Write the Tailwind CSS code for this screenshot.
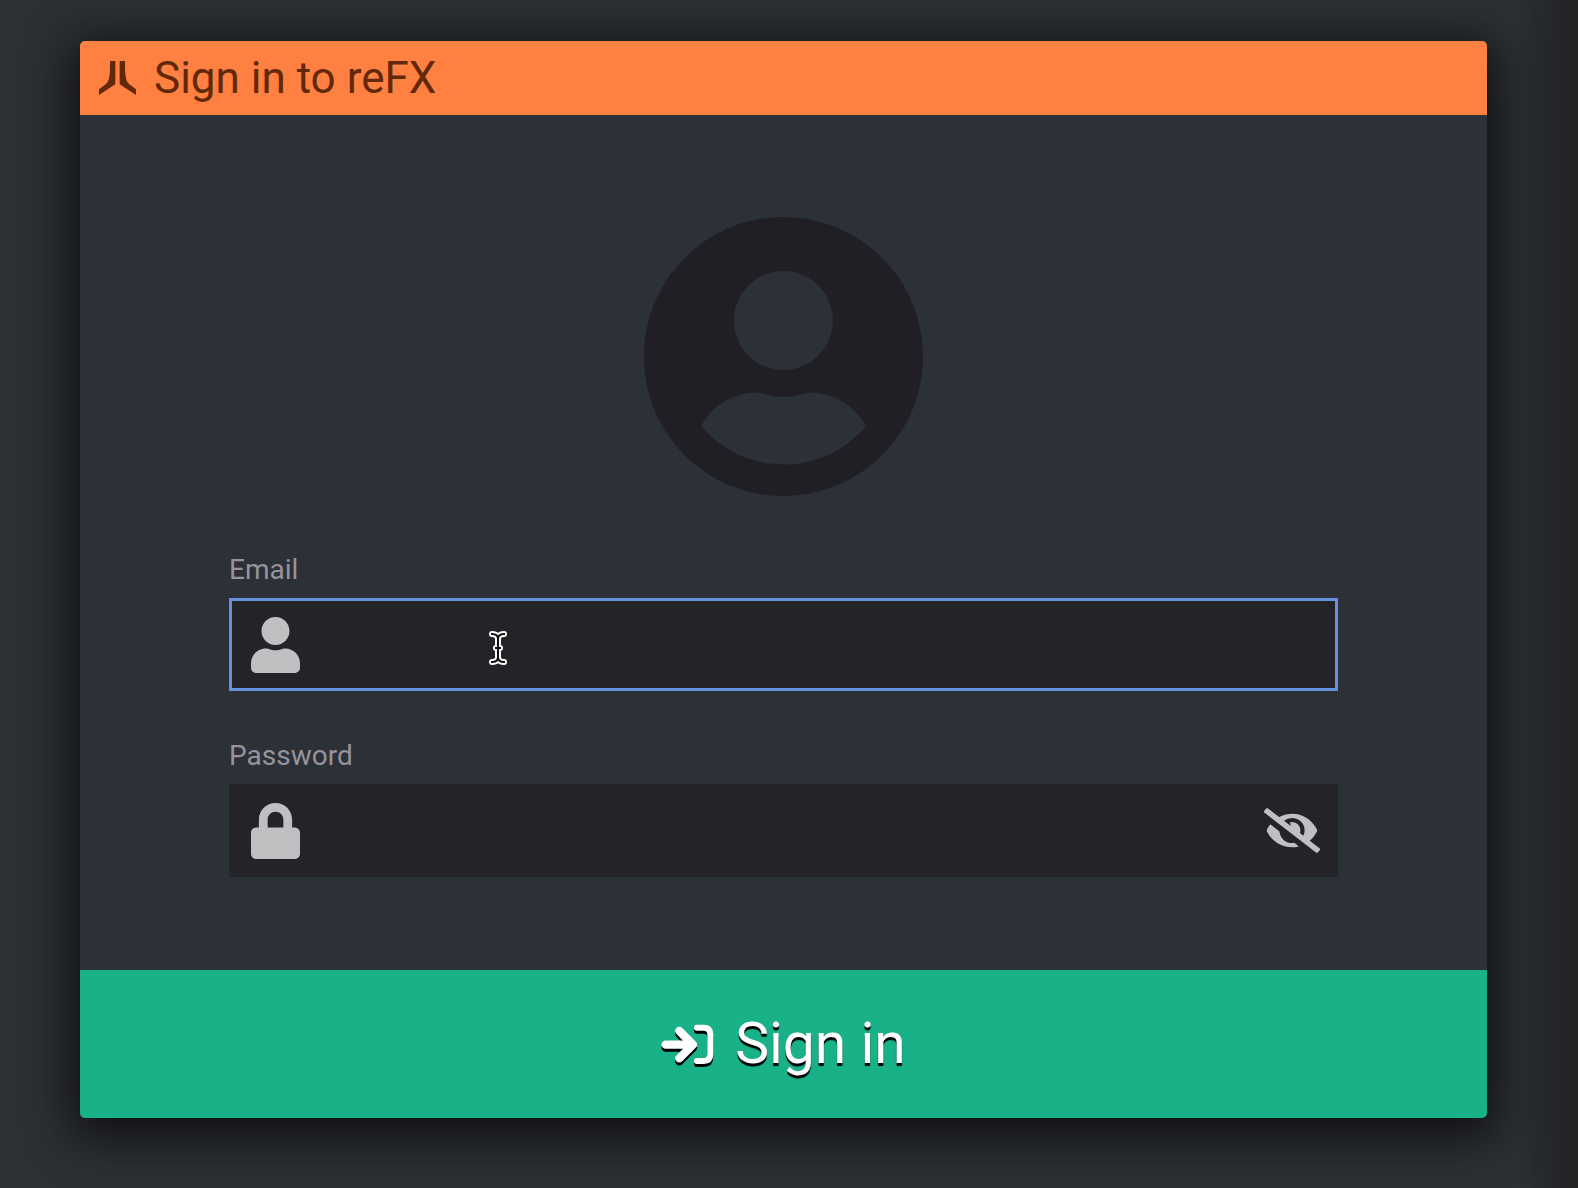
<!DOCTYPE html>
<html lang="en">
<head>
  <meta charset="UTF-8">
  <meta name="viewport" content="width=device-width, initial-scale=1.0">
  <script src="https://cdn.jsdelivr.net/npm/@tailwindcss/browser@4"></script>
  <title>Sign in to reFX</title>
</head>
<body class="min-h-screen bg-[#2c3135] bg-linear-to-r from-[#2c3135] from-96% to-[#242426] to-99% font-['Roboto','Liberation_Sans',sans-serif]">
  <main class="pt-[41px] pb-[69px] pl-[80px] pr-[91px]">
    <form class="rounded-[5px] overflow-hidden bg-[#2c3037] shadow-[0_10px_48px_10px_rgba(14,12,14,0.9)]">
      <!-- Title bar -->
      <header class="flex items-center h-[74px] pl-[19px] gap-[18px] bg-[#ff8040] text-[#61290a]">
        <svg class="w-[37px] h-[34px]" viewBox="87 93 111 102" fill="currentColor" aria-hidden="true">
          <path d="M120 93h16v70l-49 32v-17l20-15q13-10 13-50z"/>
          <path d="M165 93h-16v70l49 32v-17l-20-15q-13-10-13-50z"/>
        </svg>
        <h1 class="text-[44px] leading-[52px]">Sign in to reFX</h1>
      </header>

      <div class="px-[149px] pt-[102px] pb-[93px]">
        <svg class="block mx-auto w-[279px] h-[279px] text-[#201f25]" viewBox="0 8 496 496" fill="currentColor" aria-hidden="true">
          <path d="M248 8C111 8 0 119 0 256s111 248 248 248 248-111 248-248S385 8 248 8zm0 96c48.600 0 88 39.400 88 88s-39.400 88-88 88-88-39.400-88-88 39.400-88 88-88zm0 344c-58.700 0-111.300-26.600-146.500-68.200 18.800-35.400 55.600-59.800 98.500-59.800 2.400 0 4.800.4 7.100 1.100 13 4.200 26.600 6.900 40.900 6.900 14.300 0 28-2.700 40.900-6.900 2.300-.7 4.700-1.100 7.100-1.100 42.900 0 79.700 24.400 98.500 59.800C359.300 421.400 306.700 448 248 448z"/>
        </svg>

        <!-- Email -->
        <label for="email" class="block mt-14 mb-[10px] text-[28px] leading-[36px] text-[#96939b]">Email</label>
        <div class="relative flex items-center h-[93px] px-[19px] gap-4 bg-[#242328] border-3 border-[#6492dd]">
          <svg class="shrink-0 w-[49px] h-[56px] text-[#c0bfc1]" viewBox="0 0 448 512" fill="currentColor" aria-hidden="true">
            <path d="M224 256c70.700 0 128-57.300 128-128S294.700 0 224 0 96 57.300 96 128s57.300 128 128 128zm89.600 32h-16.700c-22.200 10.200-46.900 16-72.900 16s-50.600-5.800-72.900-16h-16.700C60.200 288 0 348.200 0 422.400V464c0 26.500 21.500 48 48 48h352c26.500 0 48-21.500 48-48v-41.600c0-74.200-60.200-134.400-134.400-134.400z"/>
          </svg>
          <input id="email" name="email" type="email" class="flex-1 min-w-0 h-full bg-transparent text-[32px] text-[#c0bfc1] outline-none" />
          <!-- text pointer -->
          <svg class="absolute left-[256px] top-[29px] w-[20px] h-[36px]" viewBox="0 0 20 36" fill="none" aria-hidden="true">
            <path d="M4 4C8 4 10 6 10 9V27C10 30 8 32 4 32M16 4C12 4 10 6 10 9M10 27C10 30 12 32 16 32M8 18H12" stroke="#fff" stroke-width="6" stroke-linecap="round"/>
            <path d="M4 4C8 4 10 6 10 9V27C10 30 8 32 4 32M16 4C12 4 10 6 10 9M10 27C10 30 12 32 16 32M8 18H12" stroke="#111" stroke-width="2" stroke-linecap="square"/>
          </svg>
        </div>

        <!-- Password -->
        <label for="password" class="block mt-[47px] mb-[10px] text-[28px] leading-[36px] text-[#96939b]">Password</label>
        <div class="flex items-center h-[93px] pl-[22px] pr-[18px] gap-4 bg-[#242328]">
          <svg class="shrink-0 w-[49px] h-[56px] text-[#c0bfc1]" viewBox="0 0 448 512" fill="currentColor" aria-hidden="true">
            <path d="M400 224h-24v-72C376 68.200 307.800 0 224 0S72 68.200 72 152v72H48c-26.500 0-48 21.500-48 48v192c0 26.500 21.500 48 48 48h352c26.500 0 48-21.500 48-48V272c0-26.500-21.500-48-48-48zm-104 0H152v-72c0-39.700 32.300-72 72-72s72 32.300 72 72v72z"/>
          </svg>
          <input id="password" name="password" type="password" class="flex-1 min-w-0 h-full bg-transparent text-[32px] text-[#c0bfc1] outline-none" />
          <button type="button" aria-label="Show password" class="shrink-0 text-[#c0bfc1]">
            <svg class="block w-[56px] h-[45px]" viewBox="0 0 640 512" fill="currentColor" aria-hidden="true">
              <path d="M320 400c-75.850 0-137.250-58.710-142.900-133.110L72.200 185.820c-13.790 17.300-26.480 35.590-36.720 55.590a32.350 32.350 0 0 0 0 29.190C89.710 376.410 197.070 448 320 448c26.910 0 52.870-4 77.890-10.460L346 397.390a144.130 144.130 0 0 1-26 2.610zm313.820 58.100l-110.550-85.440a331.250 331.250 0 0 0 81.250-102.070 32.350 32.350 0 0 0 0-29.190C550.290 135.590 442.930 64 320 64a308.150 308.150 0 0 0-147.320 37.700L45.460 3.370A16 16 0 0 0 23 6.180L3.370 31.450A16 16 0 0 0 6.180 53.900l588.360 454.730a16 16 0 0 0 22.460-2.810l19.640-25.270a16 16 0 0 0-2.820-22.450zm-183.720-142l-39.300-30.380A94.750 94.750 0 0 0 416 256a94.760 94.760 0 0 0-121.310-92.210A47.650 47.650 0 0 1 304 192a46.640 46.640 0 0 1-1.540 10l-73.610-56.890A142.310 142.310 0 0 1 320 112a143.920 143.920 0 0 1 144 144c0 21.630-5.290 41.790-13.900 60.110z"/>
            </svg>
          </button>
        </div>
      </div>

      <button type="submit" class="flex items-center justify-center w-full h-[148px] gap-5 bg-[#19b288] text-white">
        <svg class="w-[54px] h-[40px] overflow-visible drop-shadow-[0_3px_0_#000]" viewBox="62 70 162 120" fill="none" stroke="currentColor" stroke-linecap="round" stroke-linejoin="round" aria-hidden="true">
          <path d="M76 132H156M117 91L158 132L117 173" stroke-width="25"/>
          <path d="M146 116L160 132L146 148Z" fill="currentColor" stroke-width="16"/>
          <path d="M170 81H190Q210 81 210 101V161Q210 181 190 181H170" stroke-width="18"/>
        </svg>
        <span class="text-[57px] leading-[68px] [text-shadow:0_3px_1px_#000]">Sign in</span>
      </button>
    </form>
  </main>
</body>
</html>
